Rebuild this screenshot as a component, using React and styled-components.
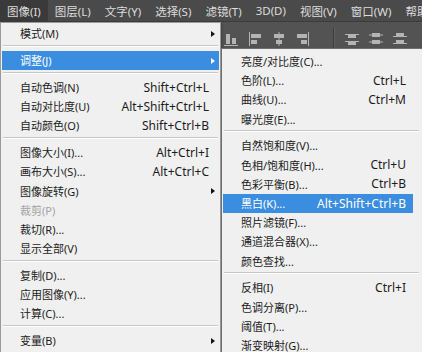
import styled, { createGlobalStyle } from "styled-components";

const GlobalStyle = createGlobalStyle`
  html, body {
    margin: 0;
    padding: 0;
    background: #535353;
  }
  * {
    box-sizing: border-box;
  }
`;

const FONT = `"Noto Sans", "Noto Sans CJK SC", sans-serif`;
const HIGHLIGHT = "#3b8de0";

const Screen = styled.div`
  position: relative;
  width: 422px;
  height: 352px;
  overflow: hidden;
  background: #535353;
  font-family: ${FONT};
`;

const MenuBar = styled.div`
  display: flex;
  height: 22px;
  background: #4a4a4a;
  border-bottom: 1px solid #3c3c3c;
`;

const MenuTitle = styled.div`
  display: flex;
  align-items: center;
  padding: 0 7px;
  font-size: 11.5px;
  color: #dcdcdc;
  background: ${(p) => (p.$open ? "#3a3a3a" : "transparent")};
  white-space: nowrap;
`;

const OptionsBar = styled.div`
  display: flex;
  align-items: center;
  gap: 8px;
  height: 28px;
  padding: 5px 0 0 223px;
  background: #535353;
`;

const ToolDivider = styled.div`
  width: 2px;
  height: 22px;
  margin: 0 1px 0 14px;
  border-left: 1px solid #3a3a3a;
  border-right: 1px solid #606060;
`;

const Dropdown = styled.div`
  position: absolute;
  left: ${(p) => p.$left}px;
  top: ${(p) => p.$top}px;
  width: ${(p) => p.$width}px;
  height: 360px;
  padding-top: ${(p) => p.$padTop}px;
  background: #f0f0f0;
  border: 1px solid ${(p) => p.$border};
  box-shadow: 1px 1px 2px rgba(0, 0, 0, 0.25);
`;

const Row = styled.div`
  display: flex;
  align-items: center;
  justify-content: space-between;
  height: 19.2px;
  margin: 0 ${(p) => p.$mr}px 0 1px;
  padding: 0 4px 0 18px;
  background: ${(p) => (p.$active ? HIGHLIGHT : "transparent")};
  color: ${(p) => (p.$active ? "#ffffff" : p.$disabled ? "#a3a3a3" : "#1c1c1c")};
  white-space: nowrap;
`;

const Label = styled.span`
  font-size: 11px;
  line-height: 1;
`;

const Shortcut = styled.span`
  margin-right: ${(p) => p.$mr}px;
  font-size: 12px;
  line-height: 1;
`;

const Arrow = styled.span`
  width: 0;
  height: 0;
  border-top: 3.5px solid transparent;
  border-bottom: 3.5px solid transparent;
  border-left: 4px solid ${(p) => (p.$active ? "#ffffff" : "#111111")};
`;

const Separator = styled.div`
  height: 7.6px;
  margin: 0 ${(p) => p.$mr}px 0 2px;
  padding-top: 1.5px;

  &::before {
    content: "";
    display: block;
    height: 1px;
    background: #c6c6c6;
    border-bottom: 1px solid #ffffff;
    box-sizing: content-box;
  }
`;

const Icon = ({ children }) => (
  <svg width="16" height="16" viewBox="0 0 16 16" fill="#b4b4b4">
    {children}
  </svg>
);

const toolIcons = [
  // align bottom edges
  <Icon key="a1">
    <rect x="3" y="3" width="4" height="10" />
    <rect x="9" y="7" width="4" height="6" />
    <rect x="1" y="14" width="14" height="1" />
  </Icon>,
  // align left edges
  <Icon key="a2">
    <rect x="2" y="1" width="1" height="14" />
    <rect x="4" y="3" width="10" height="4" />
    <rect x="4" y="9" width="6" height="4" />
  </Icon>,
  // align horizontal centers
  <Icon key="a3">
    <rect x="7.5" y="1" width="1" height="14" />
    <rect x="3" y="3" width="10" height="4" />
    <rect x="5" y="9" width="6" height="4" />
  </Icon>,
  // align right edges
  <Icon key="a4">
    <rect x="13" y="1" width="1" height="14" />
    <rect x="2" y="3" width="10" height="4" />
    <rect x="6" y="9" width="6" height="4" />
  </Icon>,
  "divider",
  // distribute top edges
  <Icon key="d1">
    <rect x="1" y="3" width="14" height="1" />
    <rect x="4" y="4" width="8" height="3" />
    <rect x="1" y="10" width="14" height="1" />
    <rect x="4" y="11" width="8" height="3" />
  </Icon>,
  // distribute vertical centers
  <Icon key="d2">
    <rect x="4" y="2" width="8" height="4" />
    <rect x="1" y="3.5" width="14" height="1" />
    <rect x="4" y="9" width="8" height="4" />
    <rect x="1" y="10.5" width="14" height="1" />
  </Icon>,
  // distribute bottom edges
  <Icon key="d3">
    <rect x="4" y="2" width="8" height="3" />
    <rect x="1" y="5" width="14" height="1" />
    <rect x="4" y="9" width="8" height="3" />
    <rect x="1" y="12" width="14" height="1" />
  </Icon>,
];

const menuTitles = [
  { label: "图像(I)", open: true },
  { label: "图层(L)" },
  { label: "文字(Y)" },
  { label: "选择(S)" },
  { label: "滤镜(T)" },
  { label: "3D(D)" },
  { label: "视图(V)" },
  { label: "窗口(W)" },
  { label: "帮助(H)" },
];

const imageMenu = [
  { label: "模式(M)", sub: true },
  "sep",
  { label: "调整(J)", sub: true, active: true },
  "sep",
  { label: "自动色调(N)", key: "Shift+Ctrl+L" },
  { label: "自动对比度(U)", key: "Alt+Shift+Ctrl+L" },
  { label: "自动颜色(O)", key: "Shift+Ctrl+B" },
  "sep",
  { label: "图像大小(I)...", key: "Alt+Ctrl+I" },
  { label: "画布大小(S)...", key: "Alt+Ctrl+C" },
  { label: "图像旋转(G)", sub: true },
  { label: "裁剪(P)", disabled: true },
  { label: "裁切(R)..." },
  { label: "显示全部(V)" },
  "sep",
  { label: "复制(D)..." },
  { label: "应用图像(Y)..." },
  { label: "计算(C)..." },
  "sep",
  { label: "变量(B)", sub: true },
];

const adjustMenu = [
  { label: "亮度/对比度(C)..." },
  { label: "色阶(L)...", key: "Ctrl+L" },
  { label: "曲线(U)...", key: "Ctrl+M" },
  { label: "曝光度(E)..." },
  "sep",
  { label: "自然饱和度(V)..." },
  { label: "色相/饱和度(H)...", key: "Ctrl+U" },
  { label: "色彩平衡(B)...", key: "Ctrl+B" },
  { label: "黑白(K)...", key: "Alt+Shift+Ctrl+B", active: true },
  { label: "照片滤镜(F)..." },
  { label: "通道混合器(X)..." },
  { label: "颜色查找..." },
  "sep",
  { label: "反相(I)", key: "Ctrl+I" },
  { label: "色调分离(P)..." },
  { label: "阈值(T)..." },
  { label: "渐变映射(G)..." },
];

const MenuItems = ({ items, rowMr, sepMr, keyMr }) =>
  items.map((item, i) =>
    item === "sep" ? (
      <Separator key={i} $mr={sepMr} />
    ) : (
      <Row key={i} $mr={rowMr} $active={item.active} $disabled={item.disabled}>
        <Label>{item.label}</Label>
        {item.key && <Shortcut $mr={keyMr}>{item.key}</Shortcut>}
        {item.sub && <Arrow $active={item.active} />}
      </Row>
    )
  );

const App = () => {
  return (
    <Screen>
      <GlobalStyle />
      <MenuBar>
        {menuTitles.map((m) => (
          <MenuTitle key={m.label} $open={m.open}>
            {m.label}
          </MenuTitle>
        ))}
      </MenuBar>
      <OptionsBar>
        {toolIcons.map((icon, i) =>
          icon === "divider" ? <ToolDivider key={i} /> : icon
        )}
      </OptionsBar>

      <Dropdown $left={0} $top={22} $width={221} $padTop={1.4} $border="#9a9a9a">
        <MenuItems items={imageMenu} rowMr={1} sepMr={2} keyMr={6} />
      </Dropdown>

      <Dropdown $left={221} $top={48} $width={205} $padTop={3} $border="#6e6e6e">
        <MenuItems items={adjustMenu} rowMr={12} sepMr={6} keyMr={3} />
      </Dropdown>
    </Screen>
  );
};

export default App;
